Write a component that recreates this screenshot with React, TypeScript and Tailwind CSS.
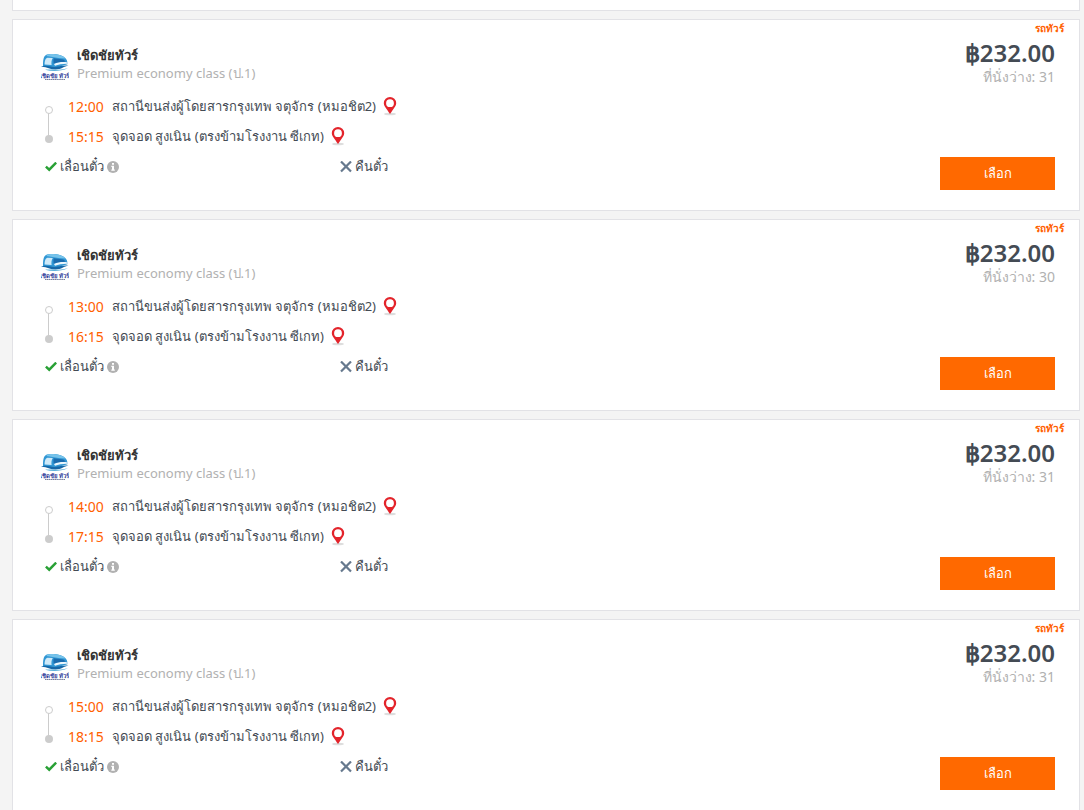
import React from 'react';

interface Trip {
  id: number;
  departs: string;
  arrives: string;
  seats: number;
}

const trips: Trip[] = [
  { id: 1, departs: '12:00', arrives: '15:15', seats: 31 },
  { id: 2, departs: '13:00', arrives: '16:15', seats: 30 },
  { id: 3, departs: '14:00', arrives: '17:15', seats: 31 },
  { id: 4, departs: '15:00', arrives: '18:15', seats: 31 },
];

const OperatorLogo = () => (
  <svg viewBox="0 0 28 28" className="size-7 shrink-0" aria-hidden="true">
    <path d="M2 12C2 4 3 1.500 6 .4c6-1.200 14-.4 18 3.400 2 1.500 2.600 4 2.400 6.500L14 14z" fill="#3197d4" />
    <path d="M6 .4c7-1.200 14.500 0 18.500 4l-7-.5L5.500 2z" fill="#77c3ea" />
    <path d="M3.600 10.500c0-3.500.8-6.500 3-6.800l5.200.4c-1.300 2-1.600 4.500-1.200 7z" fill="#cfeaf9" />
    <path d="M12.800 4.200l9.500 1.200 2.500 2-12 2.300c-.5-2-.4-3.900 0-5.500z" fill="#1a6bae" />
    <path d="M13 10c4-1.700 8.500-2.300 13.500-1.600v1.400c-4.500-.1-9 .7-12.500 2z" fill="#eaf6fd" />
    <path d="M0 12.800c5-2.700 9 .4 14 .1 5-.4 8.500-2 13.500-1.300-4.500.8-7 3.900-13 4-5 .1-9-3.200-14.500-2.800z" fill="#1667a7" />
    <path d="M4 15.700c7-.5 12 1.200 23-1.500-7.500 3.300-16 3.300-23 1.500z" fill="#5bb0dc" />
    <text x="13.500" y="23.500" textAnchor="middle" fontSize="6" fontWeight="700" fill="#343f9b">
      เชิดชัย ทัวร์
    </text>
    <path d="M4 25.500h20" stroke="#777d9d" strokeWidth="1.200" strokeDasharray="1.500 .4" />
  </svg>
);

const RouteLine = () => (
  <svg viewBox="0 0 10 60" className="h-[60px] w-2.5 shrink-0" aria-hidden="true">
    <path d="M4.500 21v24" stroke="#ccc" />
    <circle cx="5" cy="18" r="3.500" fill="#fff" stroke="#ccc" />
    <circle cx="5" cy="47" r="4" fill="#ccc" />
  </svg>
);

const PinIcon = () => (
  <svg viewBox="0 0 14 20" className="h-5 w-3.5" aria-hidden="true">
    <ellipse cx="7" cy="17" rx="6" ry="1.300" fill="#ddd" />
    <path
      d="M7 0A6.200 6.200 0 0 0 .8 6.200c0 2.500 1.800 4.300 3.100 6.300C5.200 14.400 6 15.500 7 17c1-1.500 1.800-2.600 3.100-4.500 1.300-2 3.100-3.800 3.100-6.300A6.200 6.200 0 0 0 7 0zm0 2.300a3.900 3.900 0 1 1 0 7.800 3.900 3.900 0 0 1 0-7.800z"
      fill="#e3242b"
      fillRule="evenodd"
    />
  </svg>
);

const CheckIcon = () => (
  <svg viewBox="0 0 12 10" className="h-2.5 w-3" aria-hidden="true">
    <path d="M.9 4.700l3.300 3L11.200 .6" fill="none" stroke="#28a035" strokeWidth="2.500" />
  </svg>
);

const CrossIcon = () => (
  <svg viewBox="0 0 12 12" className="size-3" aria-hidden="true">
    <path d="M1 .5l10 10M11 .5l-10 10" stroke="#66798e" strokeWidth="2.200" />
  </svg>
);

const InfoIcon = () => (
  <svg viewBox="0 0 12 12" className="size-3" aria-hidden="true">
    <circle cx="6" cy="6" r="6" fill="#b1b1b1" />
    <path d="M5 2h2v1.700H5zM4.300 4.800H7v3.700h.8v1.200H4.300V8.500H5V6h-.7z" fill="#fff" />
  </svg>
);

interface StopProps {
  time: string;
  place: string;
}

const Stop: React.FC<StopProps> = ({ time, place }) => (
  <div className="flex h-[30px] items-center">
    <span className="w-11 text-sm text-[#ff6000]">{time}</span>
    <span className="mr-[7px] text-[13px] text-[#444b54]">{place}</span>
    <button type="button" aria-label="แผนที่" className="cursor-pointer">
      <PinIcon />
    </button>
  </div>
);

const TripCard: React.FC<{ trip: Trip }> = ({ trip }) => (
  <article className="flex justify-between border border-[#e2e2e6] bg-white">
    <div className="pt-[26px] pb-7 pl-7">
      <div className="flex items-end gap-2">
        <OperatorLogo />
        <div>
          <h3 className="text-[13px] leading-[18px] font-semibold text-[#333]">เชิดชัยทัวร์</h3>
          <p className="text-[13px] leading-[18px] text-[#b1b1b1]">Premium economy class (ป.1)</p>
        </div>
      </div>
      <div className="mt-[10px] flex pl-[3px]">
        <RouteLine />
        <div className="pl-[14px]">
          <Stop time={trip.departs} place="สถานีขนส่งผู้โดยสารกรุงเทพ จตุจักร (หมอชิต2)" />
          <Stop time={trip.arrives} place="จุดจอด สูงเนิน (ตรงข้ามโรงงาน ซีเกท)" />
        </div>
      </div>
      <div className="flex h-[30px] items-center pl-1 text-[13px] text-[#444b54]">
        <div className="flex w-[295px] items-center gap-[3px]">
          <CheckIcon />
          <span>เลื่อนตั๋ว</span>
          <InfoIcon />
        </div>
        <div className="flex items-center gap-[3px]">
          <CrossIcon />
          <span>คืนตั๋ว</span>
        </div>
      </div>
    </div>
    <div className="flex flex-col items-end pr-6 pb-5">
      <span className="-mr-[9px] text-[10px] leading-4 font-semibold text-[#ff6000]">รถทัวร์</span>
      <strong className="mt-px text-2xl leading-8 font-semibold text-[#444b54]">฿232.00</strong>
      <span className="text-sm leading-4 text-[#b1b1b1]">ที่นั่งว่าง: {trip.seats}</span>
      <button
        type="button"
        className="mt-auto h-[33px] w-[115px] cursor-pointer bg-[#ff6900] text-[13px] text-white hover:bg-[#e85f00]"
      >
        เลือก
      </button>
    </div>
  </article>
);

export default function App() {
  return (
    <main className="h-screen overflow-hidden bg-[#f4f4f4] pr-1 pl-3 font-['Noto_Sans',sans-serif]">
      <div className="h-[11px] border-x border-b border-[#e2e2e6] bg-white" />
      <div className="mt-2 flex flex-col gap-2">
        {trips.map((trip) => (
          <TripCard key={trip.id} trip={trip} />
        ))}
      </div>
    </main>
  );
}
